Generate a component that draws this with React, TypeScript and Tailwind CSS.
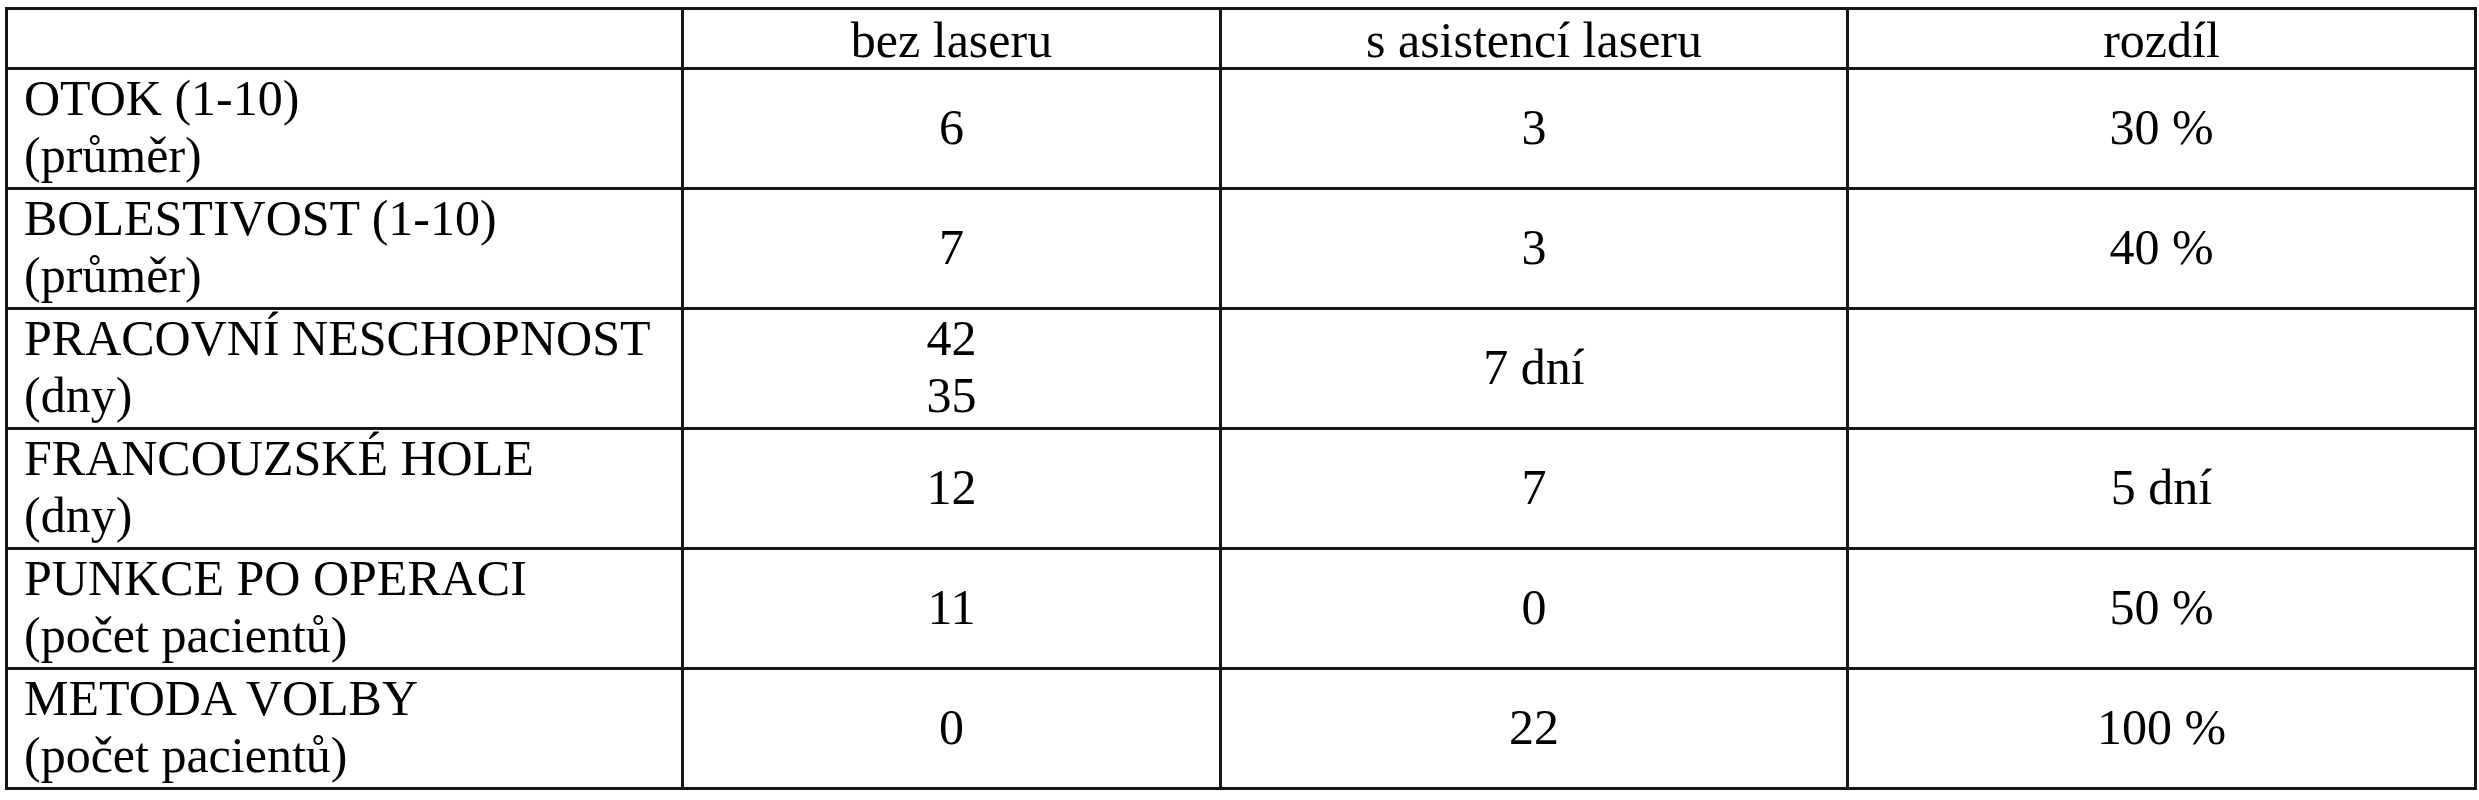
// Srovnání výsledků operace bez laseru a s asistencí laseru

const rows: { label: string[]; cells: string[][] }[] = [
  { label: ["OTOK (1-10)", "(průměr)"], cells: [["6"], ["3"], ["30 %"]] },
  { label: ["BOLESTIVOST (1-10)", "(průměr)"], cells: [["7"], ["3"], ["40 %"]] },
  { label: ["PRACOVNÍ NESCHOPNOST", "(dny)"], cells: [["42", "35"], ["7 dní"], []] },
  { label: ["FRANCOUZSKÉ HOLE", "(dny)"], cells: [["12"], ["7"], ["5 dní"]] },
  { label: ["PUNKCE PO OPERACI", "(počet pacientů)"], cells: [["11"], ["0"], ["50 %"]] },
  { label: ["METODA VOLBY", "(počet pacientů)"], cells: [["0"], ["22"], ["100 %"]] },
];

const headers = ["bez laseru", "s asistencí laseru", "rozdíl"];

export default function App() {
  return (
    <div className="w-[2479px] h-[800px] bg-white pl-[5px] pt-[7px] font-['Liberation_Serif','Times_New_Roman',serif] text-[50px] leading-[57px] text-black">
      <div className="grid w-fit grid-cols-[673px_535px_624px_625px] grid-rows-[57px_repeat(6,117px)] gap-[3px] border-[3px] border-[#161616] bg-[#161616]">
        {/* hlavička */}
        <div className="bg-white" />
        {headers.map((h) => (
          <div key={h} className="flex items-center justify-center bg-white pt-1 whitespace-nowrap">
            {h}
          </div>
        ))}

        {/* data */}
        {rows.map((row) => (
          <div key={row.label[0]} className="contents">
            <div className="flex flex-col justify-center bg-white pl-[16px] pb-[3px] whitespace-nowrap">
              {row.label.map((l) => (
                <span key={l}>{l}</span>
              ))}
            </div>
            {row.cells.map((cell, i) => (
              <div key={i} className="flex flex-col items-center justify-center bg-white pb-[3px] whitespace-nowrap">
                {cell.map((v) => (
                  <span key={v}>{v}</span>
                ))}
              </div>
            ))}
          </div>
        ))}
      </div>
    </div>
  );
}
